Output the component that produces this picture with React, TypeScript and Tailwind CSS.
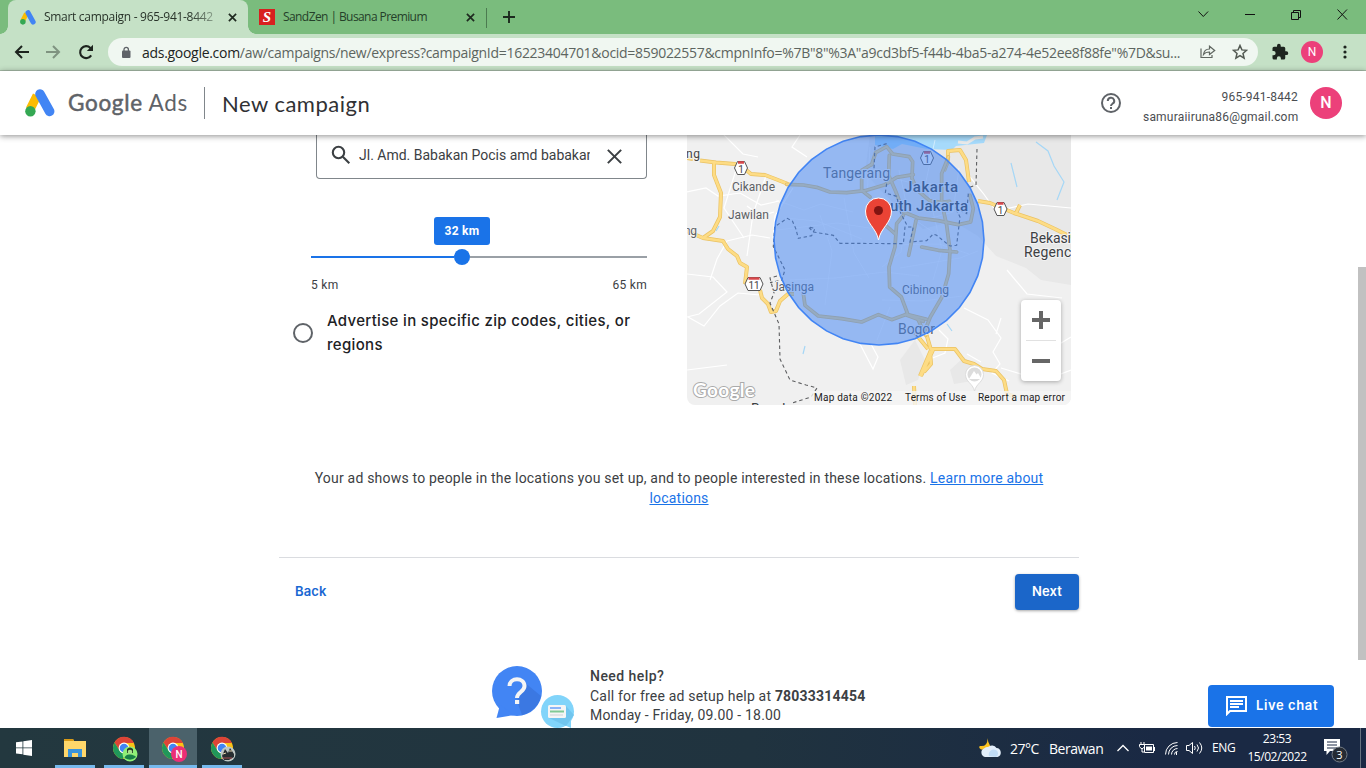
import React from "react";

const AdsLogo = ({ className }: { className: string }) => (
  <svg viewBox="0 0 30 28" className={className}>
    <path d="M12 6.5 5 20.5" stroke="#fbbc04" strokeWidth="9" strokeLinecap="butt" />
    <path d="M15 5 24.6 22.4" stroke="#4285f4" strokeWidth="9.6" strokeLinecap="round" />
    <circle cx="5.4" cy="22.2" r="5.2" fill="#34a853" />
  </svg>
);

const Close = () => (
  <svg viewBox="0 0 10 10" className="size-[9px] shrink-0" stroke="#1f2a20" strokeWidth="1.9">
    <path d="M1 1 9 9M9 1 1 9" />
  </svg>
);

function TabStrip() {
  return (
    <div className="flex h-[34px] bg-[#7abc7d]">
      <div className="relative ml-2 flex w-[240px] items-center rounded-t-lg bg-[#c5e1c6] pl-3">
        <div className="absolute bottom-0 -left-2 size-2 bg-[radial-gradient(circle_at_0_0,#7abc7d_7.5px,#c5e1c6_8px)]" />
        <div className="absolute -right-2 bottom-0 size-2 bg-[radial-gradient(circle_at_100%_0,#7abc7d_7.5px,#c5e1c6_8px)]" />
        <AdsLogo className="h-[15px] w-4 shrink-0" />
        <div className="ml-2 w-[174px] overflow-hidden text-[12px] tracking-[-0.3px] whitespace-nowrap text-[#283329] [mask-image:linear-gradient(to_right,#000_84%,rgba(0,0,0,0.3)_99%)]">
          Smart campaign - 965-941-8442
        </div>
        <div className="ml-[10px] flex"><Close /></div>
      </div>
      <div className="flex w-[238px] items-center pl-[11px]">
        <div className="flex size-4 items-center justify-center bg-[#d8201f] font-['Liberation_Serif',serif] text-[15px] leading-none font-bold text-white italic">S</div>
        <div className="ml-2 w-[183px] text-[12px] tracking-[-0.58px] whitespace-nowrap text-[#25402a]">SandZen | Busana Premium</div>
        <Close />
      </div>
      <div className="mt-2 h-5 w-px bg-[#4c7b50]" />
      <svg viewBox="0 0 12 12" className="mt-[11px] ml-4 size-3" stroke="#1c2a1e" strokeWidth="1.9"><path d="M6 0v12M0 6h12" /></svg>
      <svg viewBox="0 0 151 12" className="mt-[8px] mr-[17px] ml-auto h-3 w-[151px]" fill="none" stroke="#111" strokeWidth="1">
        <path d="m0.5 3.500 4.800 5 4.800-5M47 6.500h10M93.500 4.500h7v7h-7zM95.500 4.500v-2h7v7h-2M139.500 1.500l9.500 10M149 1.500l-9.500 10" />
      </svg>
    </div>
  );
}

function Toolbar() {
  return (
    <div className="flex h-[37px] items-center border-b border-[#aabfab] bg-[#c5e1c6] pl-[14px]">
      <svg viewBox="0 0 16 14" className="h-[14px] w-4" fill="none" stroke="#1d241e" strokeWidth="2"><path d="M15 7H2M8 1 2 7l6 6" /></svg>
      <svg viewBox="0 0 16 14" className="ml-[15px] h-[14px] w-4" fill="none" stroke="#7f9380" strokeWidth="2"><path d="M1 7h13M8 1l6 6-6 6" /></svg>
      <svg viewBox="0 0 16 16" className="ml-[17px] size-4" fill="none" stroke="#1d241e" strokeWidth="2.1"><path d="M13.200 11.400A6 6 0 1 1 12.400 3.900L14 5.600" /><path d="M15 .8v6.200H8.800z" fill="#1d241e" stroke="none" /></svg>
      <div className="ml-[14px] flex h-7 w-[1150px] items-center rounded-full bg-[#f0f7f1] pl-[13px]">
        <svg viewBox="0 0 10 13" className="h-[13px] w-[10px]"><rect x="1" y="4.500" width="8.500" height="7.500" rx="1" fill="#5f6368" /><path d="M3 5V3.500a2.200 2.200 0 0 1 4.400 0V5" fill="none" stroke="#5f6368" strokeWidth="1.300" /></svg>
        <div className="ml-[11px] w-[1045px] text-[14px] tracking-[-0.29px] whitespace-nowrap text-[#5d6560]">
          <span className="text-[#202421]">ads.google.com</span>/aw/campaigns/new/express?campaignId=16223404701&amp;ocid=859022557&amp;cmpnInfo=%7B"8"%3A"a9cd3bf5-f44b-4ba5-a274-4e52ee8f88fe"%7D&amp;su...
        </div>
        <svg viewBox="0 0 16 14" className="ml-[12px] h-[14px] w-[17px] shrink-0" fill="none" stroke="#5f6660" strokeWidth="1.200"><path d="M1.500 3.500v9h11V10M4 9.500c.5-4 3-5.500 6-5.500V1.200L15.200 5.500 10 9.500V7C7.500 7 5.500 7.500 4 9.500z" /></svg>
        <svg viewBox="0 0 16 16" className="ml-[16px] size-[16px] shrink-0" fill="none" stroke="#525952" strokeWidth="1.500"><path d="m8 1.500 1.900 4.400 4.700.4-3.600 3.100 1.100 4.700L8 11.600l-4.100 2.500L5 9.400 1.400 6.300l4.700-.4z" /></svg>
      </div>
      <svg viewBox="0 0 24 24" className="ml-[13px] size-[18px]" fill="#1d241e"><path d="M20.500 11H19V7a2 2 0 0 0-2-2h-4V3.500a2.500 2.500 0 0 0-5 0V5H4a2 2 0 0 0-2 2v3.800h1.500a2.700 2.700 0 0 1 0 5.400H2V20a2 2 0 0 0 2 2h3.800v-1.500a2.700 2.700 0 0 1 5.400 0V22H17a2 2 0 0 0 2-2v-4h1.500a2.500 2.500 0 0 0 0-5z" /></svg>
      <div className="ml-[12px] flex size-[22px] items-center justify-center rounded-full bg-[#ec407a] font-['Roboto',sans-serif] text-[12px] text-white">N</div>
      <svg viewBox="0 0 4 14" className="ml-[20px] h-[14px] w-1" fill="#1d241e"><circle cx="2" cy="2" r="1.600" /><circle cx="2" cy="7" r="1.600" /><circle cx="2" cy="12" r="1.600" /></svg>
    </div>
  );
}

function Header() {
  return (
    <header className="relative z-10 flex h-16 items-center bg-white pl-[25px] font-['Roboto',sans-serif] shadow-[0_1px_6px_rgba(0,0,0,0.45)]">
      <AdsLogo className="h-7 w-[30px]" />
      <div className="ml-[13px] w-[136px] font-['Lato',sans-serif] text-[22.5px] tracking-[0.7px] whitespace-nowrap text-[#5f6368]">
        <span className="[-webkit-text-stroke:0.5px_#5f6368]">Google</span> Ads
      </div>
      <div className="h-8 w-px bg-[#80868b]" />
      <div className="ml-[17px] font-['Lato',sans-serif] text-[22px] tracking-[0.5px] whitespace-nowrap text-[#303134]">New campaign</div>
      <svg viewBox="0 0 22 22" className="ml-auto size-[22px]" fill="none" stroke="#5f6368" strokeWidth="2"><circle cx="11" cy="11" r="9" /><path d="M7.800 9a3.200 3.200 0 1 1 4.700 2.700c-1 .7-1.500 1.100-1.500 2.300M11 15v2" /></svg>
      <div className="mt-[7px] ml-[21px] w-[155px] text-right text-[12px] leading-5 tracking-[0.2px] whitespace-nowrap text-[#4a4d51]">
        <div>965-941-8442</div>
        <div>samuraiiruna86@gmail.com</div>
      </div>
      <div className="mr-6 ml-3 flex size-8 items-center justify-center rounded-full bg-[#ec407a] text-[16px] font-medium text-white">N</div>
    </header>
  );
}

const roads = [
  "M687 158l6 1M700 160.500l16 2 19 1.500 10 5 6 5 14 1 13 5 10 4",
  "M714 163v12l7 18-1 24-7 14-10 7-16-7",
  "M703 238l20 3 5 8 9 7 3 7 7 4-2 17M760 290l2 8 6 6 3 8 5-1 4-10 8-7 6 0",
  "M978 201l12 2 24 10 24 8 17 8 16 8M1016 213l4-8",
  "M948 161v-10l12-1 6 10 3 22M948 161l-4 10",
  "M915 333l13 16M926 333l5 17M931 350l-11 26M933 350l-12 26M931 349l24 0 9 12 10 3 8 5 14 2 8 9 3 14 9 3M930 352l1 12-7 8M914 386l1 19",
];
const cityRoads = [
  "M50 157l50 2 40 7 40 14 50 2 55-6 60-18 35-22 50-8",
  "M305 98l12-36 33-18 18 22 50 8 10 15-2 50 15 35 38 32 35 5 25-3",
  "M275 175v-60l30-18M275 175l25 20M358 70l-2 60 22 50 22 60 45 18 60 8 60 12 37-8 8-40-10-40M305 275l30-5 40 35M400 250l-20 25-5 70-18 60 2 60 35 30 18 48",
  "M535 75l-20 50v85l15 70 10 75-4 70-20 70-35 60-16 40M438 265l-8 40-14 65M455 345l50 10 55 5M100 485l5 35 40 32 70 8 60 10 50-22 40 15 45-16 60 15M405 548l55 20M445 565l22 45",
];
const minor = [
  "M724 135l19 19 15 3M800 135l-8 12 15 10M686 192l20-4 12 8 22-3 21 12 18-4M736 170l-12 38 20 30M766 176l-13 38-6 42M793 188l-18 28-2 22",
  "M770 238l-18-3-25 6-10 18-7 21M687 274l26 3 14 15-28 22-12 3M760 295l-22-2-18 13-16 20-16-9M747 206l14 10 13-4",
  "M970 177l13 16 13 18 32-7 43 4M1007 270l20 24 35 4M964 308l24 12 13 18-8 14 7 12-8 9 17 8M1001 318l-5 16M1071 370l-26 10M939 330l9 9-3 14-15 6M981 362l-14-8",
  "M860 344l13 25 5-12-7-13M1071 337l-20 12-30 25-20-6M687 370l40-5",
];
const faint = [
  "M776 200l28 10 17-6 32 8M777 230l60-7 45 7M790 280l45-2 50-6 34 4M820 215l12 36-7 54M844 198l10 55 15 25M899 170l10 46 24 16M959 168l-6 44-28 8M935 140l-10 46-42-10M893 245l46-1 30 10M900 268l60-10 18-7M882 300l40 1 40-5M906 217l-5 35-19 15M870 147l-3 50 16 13M928 190l14 60-9 30M785 218l32 3 45 18M890 307l-13 33",
];

function Shield({ x, y, n, w }: { x: number; y: number; n: string; w: number }) {
  return (
    <g>
      <path d={`M${x - w + 3} ${y - 6.500}h${2 * w - 6}l3 6.500-3 6.500h-${2 * w - 6}l-3-6.500z`} fill="#fff" stroke="#555" />
      <path d={`M${x - w + 3.500} ${y - 5.500}h${2 * w - 7}`} stroke="#d9474b" strokeWidth="2.500" />
      <text x={x} y={y + 4.500} textAnchor="middle" fontSize="10" fill="#444">{n}</text>
    </g>
  );
}

const ring = Array.from({ length: 36 }, (_, i) => {
  const a = (i * Math.PI) / 18;
  return `${(879 + 105 * Math.cos(a)).toFixed(1)},${(240 + 105 * Math.sin(a)).toFixed(1)}`;
}).join(" ");

function LocationMap() {
  return (
    <div className="relative h-[270px] w-96 shrink-0 overflow-hidden rounded-b-lg bg-[#f0f0f0] font-['Roboto',sans-serif]">
      <svg viewBox="687 135 384 270" className="block h-[270px] w-96" fill="none" fontFamily="Roboto, sans-serif">
        <path d="M870 135h201v150l-30-5-15-12-30-12-18-20-25-15-30 8-38-34-20-22zM900 360l15-20 10 20-7 20-12 5zM950 370l14-13 12 11-4 13-18 3z" fill="#e8e8e8" />
        <path d="M875 135h112l-3 8-28 3-4 4-25-1-25-5-9 5-18-4z" fill="#a6dafb" />
        <path d="M958 142l9 1 8-5 8-1" stroke="#e9e9e9" strokeWidth="3" />
        {minor.map((d) => <path key={d} d={d} stroke="#fff" strokeWidth="1.200" />)}
        {faint.map((d) => <path key={d} d={d} stroke="#fff" strokeWidth="1" opacity="0.500" />)}
        {roads.map((d) => <path key={d} d={d} stroke="#eac263" strokeWidth="4" strokeLinejoin="round" />)}
        {roads.map((d) => <path key={d + "i"} d={d} stroke="#fddc85" strokeWidth="2.600" strokeLinejoin="round" />)}
        <g transform="translate(770 132) scale(0.3333)" strokeLinejoin="round" strokeLinecap="round">
          {cityRoads.map((d) => <path key={d} d={d} stroke="#e2bd69" strokeWidth="11" />)}
          {cityRoads.map((d) => <path key={d + "i"} d={d} stroke="#f2d68a" strokeWidth="6" />)}
        </g>
        <path d="M1011 163l6 24M1036 142l12 9 6 15 10 16-7 18M947 324l5 7M803 354l2-8M716 231l3-5" stroke="#a6d7f6" strokeWidth="1.200" />
        <g stroke="#5d5e60" strokeWidth="1.100" strokeDasharray="3.500 3">
          <path d="M977 149l-1 36-8 3" />
          <path d="M777 276l-7 2 4 15-4 10 9 21 1 35 10 21 16 5 11 3-6 9-19 6" />
          <g transform="translate(770 132) scale(0.3333)" strokeWidth="3.500" strokeDasharray="10 8">
            <path d="M595 185l-5 60-35-20 15 30-10 85-20 2-40-32-10-4-20 20-50 4 10-45h-25l-5 50-190-1-20-24-60-10-15-15 20 4-10 22-40 8-8-30-10-22-15-8-38 25-4 60 20 40 15 30-10 30-35 8" />
            <path d="M350 35l-35 10-3 65M350 155l-4 28 34 10 12 50 18 35" />
          </g>
        </g>
        <Shield x={741} y={168} n="1" w={6.500} />
        <Shield x={927} y={158} n="1" w={6.500} />
        <Shield x={1000.500} y={209} n="1" w={6.500} />
        <Shield x={754} y={284} n="11" w={9} />
        <g fill="#5c6064" fontSize="12" stroke="#f3f3f3" strokeWidth="2" paintOrder="stroke">
          <text x="686" y="158" textLength="14" fill="#444">ng</text>
          <text x="732" y="191" textLength="43">Cikande</text>
          <text x="728" y="219" textLength="41">Jawilan</text>
          <text x="684" y="235" textLength="13">ng</text>
          <text x="772" y="291" textLength="42">Jasinga</text>
          <text x="902" y="294" textLength="47">Cibinong</text>
          <text x="823" y="178" fontSize="14" textLength="67">Tangerang</text>
          <text x="898" y="334" fontSize="14" textLength="37">Bogor</text>
          <g fontSize="15" fontWeight="500" fill="#34383c">
            <text x="904" y="192" textLength="54">Jakarta</text>
            <text x="872" y="211" textLength="96">South Jakarta</text>
          </g>
          <g fontSize="14" fill="#3d4043">
            <text x="1030" y="243" textLength="41">Bekasi</text>
            <text x="1024" y="257" textLength="54">Regency</text>
            <text x="751" y="414" textLength="60">Bandung</text>
          </g>
        </g>
        <polygon points={ring} fill="#4285f4" fillOpacity="0.520" stroke="#4285f4" strokeWidth="1.600" />
        <path d="M974.500 391c-2-8-9-9-9-16.500a9 9 0 0 1 18 0c0 7.500-7 8.500-9 16.500z" fill="#fff" stroke="#ddd" />
        <circle cx="974.500" cy="374.500" r="7" fill="#dcdcdc" />
        <path d="m969 379 5-8 2.500 3.500 1.500-1.500 3.500 6z" fill="#fff" />
        <path d="M878.500 240c-2-12-13-17-13-29a13 13 0 0 1 26 0c0 12-11 17-13 29z" fill="#ea4335" stroke="#fff" />
        <circle cx="878.500" cy="210.500" r="4.500" fill="#811411" />
        <path d="M810 391h261v14H810z" fill="#f5f5f5" opacity="0.800" />
        <g fill="#222" fontSize="10">
          <text x="814" y="401" textLength="78">Map data ©2022</text>
          <text x="905" y="401" textLength="61">Terms of Use</text>
          <text x="978" y="401" textLength="87">Report a map error</text>
        </g>
        <text x="693" y="397" fontSize="19" fontWeight="700" fontFamily="Lato, sans-serif" textLength="62" fill="#fff" stroke="#aaa" strokeWidth="2" paintOrder="stroke">Google</text>
      </svg>
      <div className="absolute top-[165px] right-[10px] flex h-[81px] w-10 flex-col items-center rounded-sm bg-white shadow-[0_1px_4px_rgba(0,0,0,0.3)]">
        <svg viewBox="0 0 40 81" fill="#666"><path d="M18 11h4v7h7v4h-7v7h-4v-7h-7v-4h7zM11 59h18v4H11z" /><path d="M5 40h30v1H5z" fill="#e1e1e1" /></svg>
      </div>
    </div>
  );
}

function LocationForm() {
  return (
    <div className="w-[354px] text-[#3c4043]">
      <div className="ml-[23px] flex h-11 items-center rounded-b border border-t-0 border-[#80868b] pb-[3px] pl-[14px]">
        <svg viewBox="0 0 20 20" className="size-5" fill="none" stroke="#3c4043" strokeWidth="2.100"><circle cx="7.500" cy="7.500" r="5.700" /><path d="m11.800 11.800 6.500 6.500" /></svg>
        <div className="ml-2 w-[231px] overflow-hidden text-[14px] tracking-[0px] whitespace-nowrap">Jl. Amd. Babakan Pocis amd babakan</div>
        <svg viewBox="0 0 14 14" className="mt-[3px] ml-[17px] size-[15px]" fill="none" stroke="#3c4043" strokeWidth="1.900"><path d="m.8.800 12.400 12.400M13.200.8.800 13.200" /></svg>
      </div>
      <div className="mt-[38px] ml-[18px]">
        <div className="ml-[123px] flex h-7 w-14 items-center justify-center rounded-[3px] bg-[#1a73e8] text-[12px] font-bold tracking-[0.3px] text-white">32 km</div>
        <div className="mt-1 flex h-4 items-center">
          <div className="h-0.5 w-[143px] bg-[#1a73e8]" />
          <div className="size-4 rounded-full bg-[#1a73e8]" />
          <div className="h-0.5 flex-1 bg-[#9aa0a6]" />
        </div>
        <div className="mt-[10px] flex justify-between text-[12px] leading-5 tracking-[0.3px]"><span>5 km</span><span>65 km</span></div>
      </div>
      <div className="mt-[14px] flex items-center">
        <div className="size-5 rounded-full border-2 border-[#5f6368]" />
        <div className="ml-[14px] font-['Inter',sans-serif] text-[15px] leading-6 font-medium tracking-[0.32px] whitespace-nowrap text-[#202124]">Advertise in specific zip codes, cities, or<br />regions</div>
      </div>
    </div>
  );
}

function HelpArt() {
  return (
    <svg viewBox="492 666 83 62" className="h-[62px] w-[83px]">
      <circle cx="517" cy="691" r="25" fill="#4285f4" /><path d="M500 705l-3.500 13 18-3z" fill="#4285f4" />
      <path d="M524 682l17 14a25 25 0 0 1-19 19l-5-14z" fill="#3b78e2" />
      <path d="M509.500 686c0-9 15-9 15 0 0 6-7.500 6-7.500 12" fill="none" stroke="#f5f5f5" strokeWidth="4" /><path d="M515 700h4.200v4H515z" fill="#f5f5f5" />
      <circle cx="557.500" cy="711.500" r="16.500" fill="#81d4fa" /><path d="M562 724l9 4v-9z" fill="#81d4fa" />
      <path d="M566 706l8 9-8 11-17-8z" fill="#71c5ee" />
      <rect x="548" y="705" width="18" height="13" rx="1.500" fill="#f5f5f5" /><path d="M550 708h11" stroke="#8ab4f8" strokeWidth="2" /><path d="M550 711.500h14" stroke="#81c995" strokeWidth="2" /><path d="M550 715h13" stroke="#dadce0" strokeWidth="1.500" />
    </svg>
  );
}

function Content() {
  return (
    <main className="relative flex h-[593px] overflow-hidden bg-white font-['Roboto',sans-serif]">
      <div className="ml-[279px] w-[800px]">
        <div className="flex gap-10 pl-[14px]">
          <LocationForm />
          <LocationMap />
        </div>
        <p className="mt-[63px] text-center text-[14px] leading-5 tracking-[0.2px] text-[#3c4043]">
          Your ad shows to people in the locations you set up, and to people interested in these locations. <span className="text-[#1a73e8] underline">Learn more about<br />locations</span>
        </p>
        <div className="mt-[49px] flex items-center justify-between border-t border-[#dadce0] pt-4 pl-4 font-['Inter',sans-serif] text-[13px] font-semibold tracking-[0.15px]">
          <button className="text-[#1967d2]">Back</button>
          <button className="h-9 w-16 rounded bg-[#1b66c9] text-white shadow-[0_1px_3px_rgba(0,0,0,0.35)]">Next</button>
        </div>
        <div className="mt-14 flex pl-[213px] text-[14px] tracking-[0.2px] whitespace-nowrap text-[#3c4043]">
          <HelpArt />
          <div className="mt-px ml-[15px] leading-[19.5px]">
            <div className="font-medium tracking-[0.45px]">Need help?</div>
            <div>Call for free ad setup help at <b>78033314454</b></div>
            <div>Monday - Friday, 09.00 - 18.00</div>
          </div>
        </div>
      </div>
      <div className="mt-[132px] ml-auto h-[393px] w-2 bg-[#c1c1c1]" />
      <button className="absolute right-8 bottom-px flex h-[42px] w-[126px] items-center rounded bg-[#1a73e8] pl-[18px] font-['Inter',sans-serif] text-[13px] font-semibold tracking-[0.6px] text-white">
        <svg viewBox="0 0 21 20" className="mr-[9px] h-5 w-[21px]" fill="none" stroke="#fff" strokeWidth="2"><path d="M1 18V1h19v14H4zM4 5h13M4 8h13M4 11h9" /></svg>
        Live chat
      </button>
    </main>
  );
}

function Chrome({ children }: { children: React.ReactNode }) {
  return (
    <svg viewBox="0 0 26 26" className="mt-[8px] ml-px size-[26px]">
      <circle cx="12" cy="12" r="11" fill="#fbc116" />
      <path d="M2.500 6.500A11 11 0 0 1 22 7H12a5 5 0 0 0-4.400 7.400z" fill="#dd4437" />
      <path d="M2.500 6.500 7.600 14.500A5 5 0 0 0 14 16.500L11 23A11 11 0 0 1 2.500 6.500z" fill="#20975a" />
      <circle cx="12" cy="12" r="5.400" fill="#fff" /><circle cx="12" cy="12" r="4.300" fill="#4285f4" />
      {children}
    </svg>
  );
}

function Taskbar() {
  const cell = "flex h-10 flex-col items-center justify-between";
  const line = "h-[3px] w-full bg-[#76b9ed]";
  return (
    <footer className="flex h-10 items-center bg-[linear-gradient(to_right,#23383f,#20333f_55%,#1a2944_85%)] text-[12px] text-white">
      <svg viewBox="0 0 16 16" className="ml-4 size-4" fill="#fff"><path d="M0 2.300 6.500 1.400v6H0zM7.300 1.300 16 0v7.400H7.300zM0 8.300h6.500v6L0 13.500zM7.300 8.300H16V16l-8.700-1.300z" /></svg>
      <div className={`${cell} ml-[23px] w-10`}>
        <svg viewBox="0 0 22 20" className="mt-[10px] h-5 w-[22px]"><path d="M0 1h9l1 2h12v16H0z" fill="#ffd76a" /><path d="M0 1h9l1 2H0z" fill="#d99a16" /><path d="M4 19v-8h14v8h-4v-4H8v4z" fill="#3a94db" /></svg>
        <div className={line} />
      </div>
      <div className={`${cell} ml-[9px] w-10`}>
        <Chrome><circle cx="18" cy="18" r="7.500" fill="#8ff077" /><path d="M15 13q3-3 6 0v4h-6z" fill="#263d28" /><circle cx="18" cy="16" r="2.300" fill="#a5e28a" /><path d="M12.500 22q1-4 5.500-3.500T24 21q-5 5-11.500 1z" fill="#198047" /></Chrome>
        <div className={line} />
      </div>
      <div className={`${cell} ml-[5px] w-12 bg-[#4b626b]`}>
        <Chrome><circle cx="18" cy="18" r="8" fill="#ec2f76" /><text x="18" y="21.500" textAnchor="middle" fontSize="10" fontFamily="Roboto, sans-serif" fontWeight="500" fill="#fff">N</text></Chrome>
        <div className={line} />
      </div>
      <div className={`${cell} ml-[5px] w-10`}>
        <Chrome><circle cx="18" cy="18" r="7.500" fill="#bfc8c5" /><path d="M12 20l3-7 3 4 2-5 4 6v3l-5 3h-5z" fill="#272e31" /><path d="M13 18l3-1M19 15h3" stroke="#e6d6b0" /><path d="M12.500 22h9.500" stroke="#a94f54" /></Chrome>
        <div className={line} />
      </div>
      <svg viewBox="0 0 23 20" className="ml-auto h-5 w-[23px]"><path d="M8.500 0Q9 5 11 7.500 14 11 13 12L2 11.500Q-1 9.500 1 8q8 1 7.500-8z" fill="#fcc421" /><path d="M6 19a4.500 4.500 0 0 1-1-8.500 4 4 0 0 1 4-1.500 5.500 5.500 0 0 1 8.500 1 4.600 4.600 0 0 1 1 9z" fill="#e3effb" /><path d="M10 18a5 5 0 0 1 7-6 4 4 0 0 1 0 7z" fill="#c0dcf6" /></svg>
      <div className="ml-2 w-[107px] text-[14px] tracking-[-0.47px] whitespace-pre">27°C<span className="ml-[10px]">Berawan</span></div>
      <svg viewBox="0 0 12 8" className="h-2 w-3" fill="none" stroke="#fff" strokeWidth="1.300"><path d="m.5 7 5.500-5.500L11.500 7" /></svg>
      <svg viewBox="0 0 17 12" className="ml-[10px] h-3 w-[17px]" fill="none" stroke="#fff"><path d="M5.500 2.500h9v8h-9zM15.500 5v4M2 0v3M5 0v3M.5 2.500h5v2l-1.500 2H2L.5 4.500zM3 6v4h2" /><path d="M7 4.500h6v4H7z" fill="#fff" stroke="none" /></svg>
      <svg viewBox="0 0 13 13" className="ml-[9px] size-[13px]" fill="none" stroke="#fff"><path d="M.5 12.500a12 12 0 0 1 12-12M3.500 12.500a9 9 0 0 1 9-9M6.500 12.500a6 6 0 0 1 6-6M9.500 12.500a3 3 0 0 1 3-3M11.500 10v3" /></svg>
      <svg viewBox="0 0 17 14" className="ml-[8px] h-[14px] w-[17px]" fill="none" stroke="#fff"><path d="M.5 4.500H3L6.500 1.500v11L3 9.500H.5zM8.500 5q1.500 2 0 4M11 3.500q3 3.500 0 7M13.500 1.500q4.500 5.500 0 11" /></svg>
      <div className="ml-[9px] w-[23px] text-[12px] tracking-[-0.3px]">ENG</div>
      <div className="ml-[12px] w-[60px] text-center leading-[18px] tracking-[-0.45px] whitespace-nowrap"><div>23:53</div><div>15/02/2022</div></div>
      <svg viewBox="0 0 24 24" className="mt-[6px] ml-[17px] size-6"><path d="M0 0h16v12H6l-3.500 4v-4H0z" fill="#fff" /><path d="M3 3h10M3 6h10M3 9h10" stroke="#1a2944" /><circle cx="15.500" cy="15.500" r="7.500" fill="#252b34" stroke="#737b86" /><text x="15.500" y="19.500" textAnchor="middle" fontSize="11" fill="#fff">3</text></svg>
      <div className="mr-1 ml-[12px] h-10 w-px bg-[#66727f]" />
      <div className="w-px" />
    </footer>
  );
}

export default function App() {
  return (
    <div className="h-[768px] w-[1366px] overflow-hidden font-['Open_Sans','Noto_Sans',sans-serif]">
      <TabStrip />
      <Toolbar />
      <Header />
      <Content />
      <Taskbar />
    </div>
  );
}
